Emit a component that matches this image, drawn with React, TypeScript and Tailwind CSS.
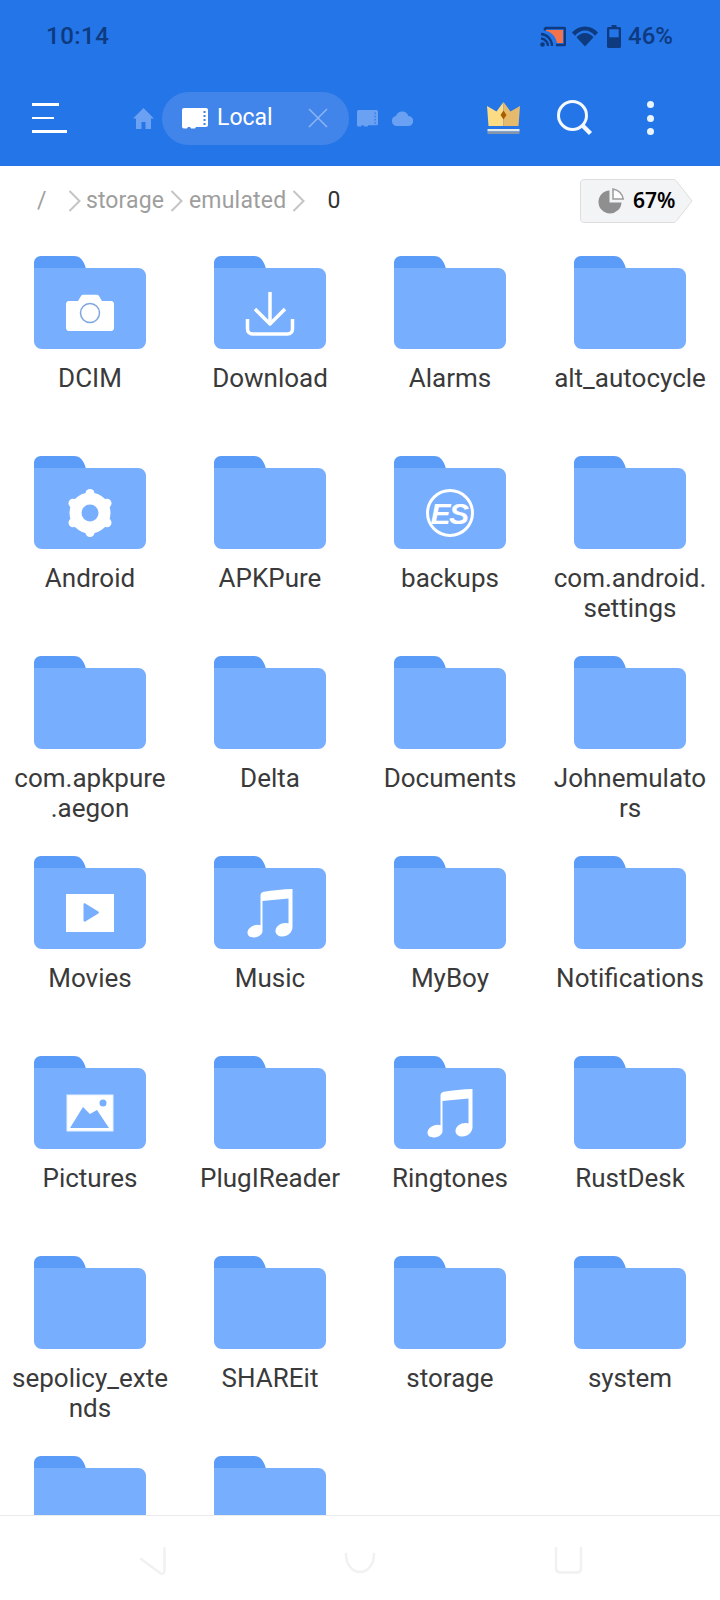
import React from "react";

type Glyph = "camera" | "download" | "gear" | "es" | "play" | "music" | "picture" | null;

const folders: { name: string; glyph?: Glyph }[] = [
  { name: "DCIM", glyph: "camera" },
  { name: "Download", glyph: "download" },
  { name: "Alarms" },
  { name: "alt_autocycle" },
  { name: "Android", glyph: "gear" },
  { name: "APKPure" },
  { name: "backups", glyph: "es" },
  { name: "com.android.\nsettings" },
  { name: "com.apkpure\n.aegon" },
  { name: "Delta" },
  { name: "Documents" },
  { name: "Johnemulato\nrs" },
  { name: "Movies", glyph: "play" },
  { name: "Music", glyph: "music" },
  { name: "MyBoy" },
  { name: "Notifications" },
  { name: "Pictures", glyph: "picture" },
  { name: "PlugIReader" },
  { name: "Ringtones", glyph: "music" },
  { name: "RustDesk" },
  { name: "sepolicy_exte\nnds" },
  { name: "SHAREit" },
  { name: "storage" },
  { name: "system" },
  { name: "" },
  { name: "" },
];

// Lobes of the settings cog, at the corners of a pointy-topped hexagon.
const cogLobes = [
  [56, 37.5],
  [73, 47.25],
  [73, 66.75],
  [56, 76.5],
  [39, 66.75],
  [39, 47.25],
];

function FolderGlyph({ kind }: { kind: Glyph }) {
  switch (kind) {
    case "camera":
      return (
        <g>
          <path d="M35 45h9l3-5c.6-.9 1.400-1.300 2.400-1.300h13.200c1 0 1.800.4 2.400 1.300l3 5h9c1.700 0 3 1.300 3 3v24c0 1.700-1.300 3-3 3H35c-1.700 0-3-1.300-3-3V48c0-1.700 1.300-3 3-3z" fill="#fff" />
          <circle cx="56" cy="57" r="9.500" fill="none" stroke="#7FA6DF" strokeWidth="1.500" />
        </g>
      );
    case "download":
      return (
        <g fill="none" stroke="#fff" strokeWidth="3.500" strokeLinejoin="round">
          <path d="M56 36v31" />
          <path d="M41 53l15 15 15-15" />
          <path d="M33.500 63v10c0 3 2 5 5 5h35c3 0 5-2 5-5V63" />
        </g>
      );
    case "gear":
      return (
        <g fill="#fff">
          <path d="M56 37.500l17 9.750v19.500l-17 9.750-17-9.750v-19.500z" />
          <circle cx="56" cy="57" r="20.500" />
          {cogLobes.map(([x, y], i) => (
            <circle key={i} cx={x} cy={y} r="4.500" />
          ))}
          <circle cx="56" cy="57" r="8.500" fill="#78AEFE" />
        </g>
      );
    case "es":
      return (
        <g>
          <circle cx="56" cy="57" r="22.500" fill="none" stroke="#fff" strokeWidth="3" />
          <text x="55" y="67.500" textAnchor="middle" letterSpacing="-1.500" fontFamily="Liberation Sans, sans-serif" fontWeight="700" fontStyle="italic" fontSize="30" fill="#fff">ES</text>
        </g>
      );
    case "play":
      return (
        <g>
          <rect x="32" y="38" width="48" height="38" fill="#fff" />
          <path d="M49.500 48.500c0-1 1-1.500 1.800-1l13 8c.8.500.8 1.500 0 2l-13 8c-.8.500-1.800 0-1.800-1z" fill="#78AEFE" />
        </g>
      );
    case "music":
      return (
        <path
          d="M78.500 33v38c0 5.500-5 9.500-10 9.500-4 0-7-2-7-5.500 0-4.500 5-8 10-8 1.300 0 2.500.2 3 .5V42.500l-26 2.500v30c0 4-4.500 6.500-9 6.500-3.500 0-6-1.800-6-4.700 0-4.300 5-8 10-8 1.200 0 2.300.2 3 .5V39.500c0-1.700 1.200-3.300 3.300-3.700 9-1.600 19-2.500 28.700-2.800z"
          fill="#fff"
        />
      );
    case "picture":
      return (
        <g>
          <rect x="33" y="39" width="46" height="36" fill="#fff" stroke="#E6EFFC" />
          <path d="M36 72l13-21 7 7 7-4 12 18z" fill="#78AEFE" />
          <circle cx="69" cy="47" r="3.500" fill="#78AEFE" />
        </g>
      );
    default:
      return null;
  }
}

function FolderIcon({ glyph }: { glyph?: Glyph }) {
  return (
    <svg width="112" height="93" viewBox="0 0 112 93" className="block shrink-0">
      <path d="M0 13V7c0-4 3-7 7-7h33c6 0 10 4.500 12 13z" fill="#5A9CF8" />
      <path d="M0 12h104c4.500 0 8 3.500 8 8v65c0 4.500-3.500 8-8 8H8c-4.500 0-8-3.500-8-8z" fill="#78AEFE" />
      {glyph ? <FolderGlyph kind={glyph} /> : null}
    </svg>
  );
}

function SdCard({ fill, dots, width, height }: { fill: string; dots: string; width: number; height: number }) {
  return (
    <svg width={width} height={height} viewBox="0 0 26 21" className="block">
      <path d="M2 0h22c1.100 0 2 .9 2 2v15c0 1.100-.9 2-2 2H14l-1 1.500H9L8 19H6l-1 1.500H2c-1.100 0-2-.9-2-2V2C0 .9.900 0 2 0z" fill={fill} />
      <g fill={dots}>
        <rect x="21.500" y="3" width="2" height="2" />
        <rect x="21.500" y="7" width="2" height="2" />
        <rect x="21.500" y="11" width="2" height="2" />
        <rect x="21.500" y="15" width="2" height="2" />
      </g>
    </svg>
  );
}

function Chevron() {
  return (
    <svg width="13" height="24" viewBox="0 0 13 24" className="block shrink-0">
      <path d="M1.500 2l10 10-10 10" fill="none" stroke="#C4C4C4" strokeWidth="2" />
    </svg>
  );
}

function StatusBar() {
  return (
    <div className="h-[72px] flex items-center pl-[46px] pr-[47px] text-[#0E3A80]">
      <span className="font-[family-name:Roboto,sans-serif] font-medium text-[24px] tracking-[0.5px]">10:14</span>
      <div className="ml-auto flex items-center">
        <svg width="26" height="21" viewBox="0 0 26 21" className="block">
          <path d="M5 2h19c.6 0 1 .4 1 1v15c0 .6-.4 1-1 1h-8" fill="none" stroke="#0E3A80" strokeWidth="2.500" />
          <path d="M5 1.500v3" stroke="#0E3A80" strokeWidth="2.500" />
          <path d="M6 4h17v13h-6C16 11 12 6 6 5z" fill="#F5734B" />
          <path d="M1 8c6 .3 11 5.500 11 12M1 12.500c3.800.2 7 3.600 7 7.500" fill="none" stroke="#0E3A80" strokeWidth="2.300" />
          <circle cx="2.500" cy="18.500" r="2.300" fill="#0E3A80" />
        </svg>
        <svg width="26" height="21" viewBox="0 0 26 21" className="block ml-[6px]">
          <path d="M0 6.500C3.400 2.700 8 .5 13 .5s9.600 2.200 13 6l-3 3.200C20.400 6.500 16.900 4.500 13 4.500S5.600 6.500 3 9.700z" fill="#0E3A80" />
          <path d="M4.500 11.300C6.700 8.700 9.700 7 13 7s6.300 1.700 8.500 4.300L13 20.500z" fill="#0E3A80" />
        </svg>
        <svg width="14" height="23" viewBox="0 0 14 23" className="block ml-[9px]">
          <path d="M4.500 0h5v2h3c.8 0 1.500.7 1.500 1.500V21.500c0 .8-.7 1.500-1.500 1.500h-11C.7 23 0 22.300 0 21.500V3.500C0 2.700.7 2 1.500 2h3z" fill="#0E3A80" />
          <rect x="2.300" y="4.300" width="9.400" height="8" fill="#2475E7" />
        </svg>
        <span className="ml-[7px] font-[family-name:Roboto,sans-serif] font-medium text-[24px]">46%</span>
      </div>
    </div>
  );
}

function Toolbar() {
  return (
    <div className="h-[94px] pb-[2px] flex items-center pl-[32px]">
      <div className="w-[35px] flex flex-col gap-[11px]">
        <div className="h-[2.500px] w-[27px] bg-white" />
        <div className="h-[2.500px] w-[22px] bg-white" />
        <div className="h-[2.500px] w-[35px] bg-white" />
      </div>
      <svg width="21" height="21" viewBox="0 0 21 21" className="block ml-[66px]">
        <path d="M10.500 0L0 10.500h3V21h5.500v-7h4v7H18V10.500h3z" fill="#6BA1F3" />
      </svg>
      <div className="ml-[8px] w-[187px] h-[53px] rounded-full bg-[#4285EA] flex items-center pl-[20px] text-white">
        <SdCard fill="#fff" dots="#3F82E9" width={26} height={21} />
        <span className="ml-[9px] font-[family-name:Roboto,sans-serif] text-[23px]">Local</span>
        <svg width="20" height="20" viewBox="0 0 20 20" className="block ml-[35px]">
          <path d="M1 1l18 18M19 1L1 19" stroke="#8DB6F4" strokeWidth="1.500" />
        </svg>
      </div>
      <div className="ml-[8px]">
        <SdCard fill="#6BA1F3" dots="#3F82E9" width={21} height={17} />
      </div>
      <svg width="21" height="16" viewBox="0 0 21 16" className="block ml-[14px]">
        <path d="M5 16a5 5 0 0 1-1-9.900A6.500 6.500 0 0 1 16.400 6 5 5 0 0 1 16 16z" fill="#6BA1F3" />
      </svg>
      <svg width="35" height="33" viewBox="0 0 35 33" className="block ml-[73px]">
        <path d="M17.500 0l-7 9.500L1 4l1.500 20h15z" fill="#FCDB85" />
        <path d="M17.500 0l7 9.500L34 4l-1.500 20h-15z" fill="#E5BA6C" />
        <rect x="1.500" y="27" width="32" height="2.500" fill="#E3E8EE" />
        <rect x="1.500" y="29.500" width="32" height="2.500" fill="#8596AB" />
        <path d="M17.500 8.500l3 4.500-3 4.500-3-4.500z" fill="#A85E00" />
      </svg>
      <svg width="36" height="36" viewBox="0 0 36 36" className="block ml-[36px]">
        <circle cx="15.500" cy="15.500" r="14" fill="none" stroke="#F3F9FF" strokeWidth="3" />
        <path d="M25.500 25.500l8 8" stroke="#F3F9FF" strokeWidth="4.500" />
      </svg>
      <div className="ml-[54px] flex flex-col gap-[6.500px]">
        <div className="w-[7px] h-[7px] rounded-full bg-[#EAF4FF]" />
        <div className="w-[7px] h-[7px] rounded-full bg-[#EAF4FF]" />
        <div className="w-[7px] h-[7px] rounded-full bg-[#EAF4FF]" />
      </div>
    </div>
  );
}

function Breadcrumb() {
  return (
    <div className="h-[70px] flex items-center pl-[37px] pr-[27px] font-[family-name:Roboto,sans-serif] text-[23px] text-[#9E9E9E]">
      <span className="w-[31px]">/</span>
      <Chevron />
      <span className="ml-[5px] tracking-[0.1px]">storage</span>
      <span className="ml-[6px]"><Chevron /></span>
      <span className="ml-[6px] tracking-[0.2px]">emulated</span>
      <span className="ml-[6px]"><Chevron /></span>
      <span className="ml-[22px] text-[#333]">0</span>
      <div className="ml-auto relative w-[113px] h-[44px] flex items-center pl-[18px]">
        <svg width="113" height="44" viewBox="0 0 113 44" className="absolute inset-0 block">
          <path d="M4 .5h89c1.500 0 2.700.6 3.600 1.800L112 22 96.600 41.700c-.9 1.200-2.100 1.800-3.600 1.800H4c-2 0-3.500-1.500-3.500-3.500V4C.5 2 2 .5 4 .5z" fill="#F3F4F6" stroke="#DEDEDE" />
        </svg>
        <svg width="26" height="26" viewBox="0 0 26 26" className="relative block">
          <path d="M11.500 2.500a11.500 11.500 0 1 0 12 12h-12z" fill="#8F8F8F" />
          <path d="M15 .9c5.200.7 9.400 4.900 10.200 10H15z" fill="#fff" stroke="#9C9C9C" strokeWidth="1.500" />
        </svg>
        <span className="relative ml-[9px] font-[family-name:'Noto_Sans',sans-serif] font-semibold text-[21px] text-black">67%</span>
      </div>
    </div>
  );
}

function FolderGrid() {
  return (
    <div className="grid grid-cols-4 pt-[20px]">
      {folders.map((f, i) => (
        <div key={i} className="h-[200px] flex flex-col items-center">
          <FolderIcon glyph={f.glyph} />
          {f.name ? (
            <div className="mt-[14px] text-center whitespace-pre-line font-[family-name:Roboto,sans-serif] text-[26px] leading-[30px] text-[#3A3A3A]">
              {f.name}
            </div>
          ) : null}
        </div>
      ))}
    </div>
  );
}

function NavBar() {
  return (
    <div className="h-[85px] shrink-0 bg-white border-t border-[#EBEBEB]">
      <svg width="720" height="84" viewBox="0 0 720 84" className="block">
        <g fill="none" stroke="#F1F1F1" strokeWidth="2.500" strokeLinecap="round">
          <path d="M141 43l19 14c2 1.500 4.500 1 4.500-2V32" />
          <path d="M346 38c0 10 6 18 14 18s14-8 14-18" />
          <path d="M556 32v20c0 3 1.500 4.500 4.500 4.500h16c3 0 4.500-1.500 4.500-4.500V32" />
        </g>
      </svg>
    </div>
  );
}

export default function App() {
  return (
    <div className="w-[720px] h-[1600px] flex flex-col bg-white overflow-hidden">
      <div className="bg-[#2475E7] shrink-0">
        <StatusBar />
        <Toolbar />
      </div>
      <div className="flex-1 min-h-0 overflow-hidden">
        <Breadcrumb />
        <FolderGrid />
      </div>
      <NavBar />
    </div>
  );
}
